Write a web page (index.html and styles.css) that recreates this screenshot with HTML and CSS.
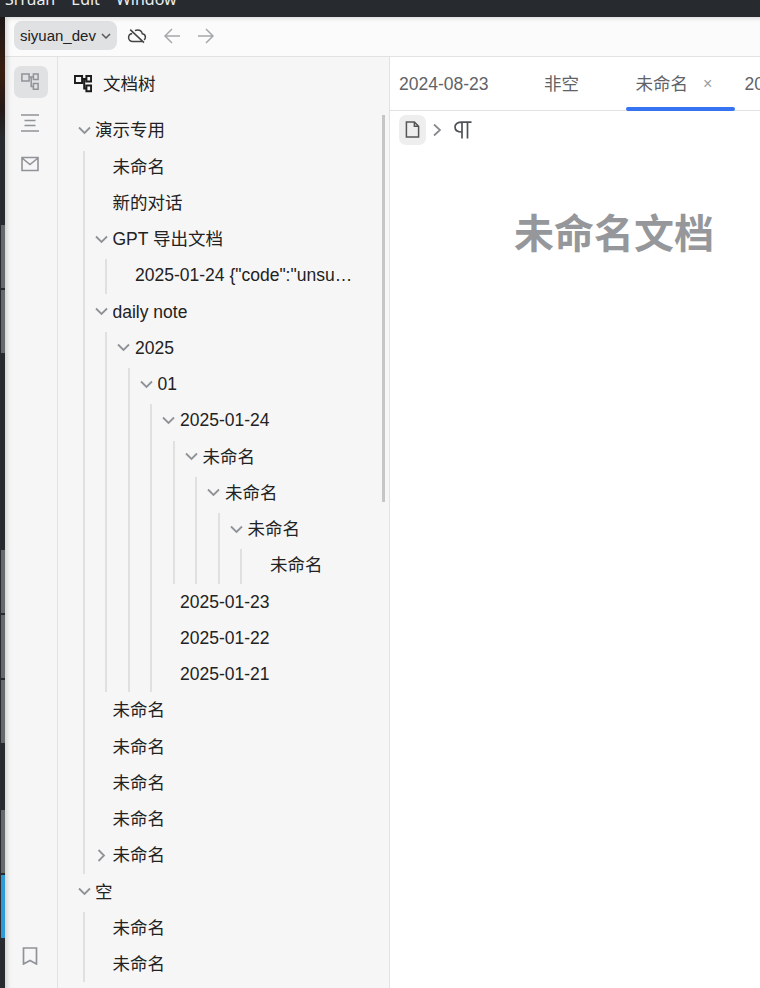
FILE: index.html
```html
<!DOCTYPE html>
<html lang="zh-CN">
<head>
  <meta charset="UTF-8" />
  <title>SiYuan</title>
  <link rel="stylesheet" href="styles.css">
</head>
<body>
  <svg class="defs" width="0" height="0">
    <symbol id="i-down" viewBox="0 0 19 19"><path d="M4 6.500l5.500 5.500 5.500-5.500" fill="none" stroke="currentColor" stroke-width="1.800"/></symbol>
    <symbol id="i-right" viewBox="0 0 19 19"><path d="M6.500 4l5.500 5.500-5.500 5.500" fill="none" stroke="currentColor" stroke-width="1.800"/></symbol>
    <symbol id="i-tree" viewBox="0 0 18 18"><path d="M.9.9h7.200v7.200H.9zM12.400.9h4.700v5.600h-4.700zM12.400 10.600h4.700v5.600h-4.700zM8.100 4h4.300M10.200 4v9.400h2.200" fill="none" stroke="currentColor"/></symbol>
  </svg>

  <div class="os-bar">
    <div class="os-menu"><span>SiYuan</span><span>Edit</span><span>Window</span></div>
  </div>

  <div class="desktop">
    <div class="strip">
      <div class="wall"></div>
      <div class="thumb"></div>
      <div class="thumb"></div>
      <div class="thumb second"></div>
      <div class="thumb"></div>
      <div class="thumb"></div>
      <div class="thumb third"></div>
      <div class="thumb blue"></div>
    </div>

    <div class="window">
      <div class="toolbar">
        <div class="box-btn">siyuan_dev
          <svg class="box-arrow" viewBox="0 0 12 12"><path d="M2 4l4 4 4-4" fill="none" stroke="currentColor" stroke-width="1.500"/></svg>
        </div>
        <svg class="cloud" viewBox="0 0 20 20"><path d="M5.200 7.600C3 8 1.600 9.700 1.600 11.600c0 2.200 1.800 3.900 4 3.900h9.400M8 4.700c.8-.5 1.700-.7 2.600-.7 2.300 0 4.200 1.500 4.700 3.700 1.800.2 3.100 1.700 3.100 3.500 0 1.100-.5 2.100-1.300 2.800M3.200 3.600l13.800 13" fill="none" stroke="currentColor" stroke-width="1.500"/></svg>
        <svg class="nav-arrow" viewBox="0 0 18 18"><path d="M17 9H2M9 2L2 9l7 7" fill="none" stroke="currentColor" stroke-width="1.500"/></svg>
        <svg class="nav-arrow" viewBox="0 0 18 18"><path d="M1 9h15M9 2l7 7-7 7" fill="none" stroke="currentColor" stroke-width="1.500"/></svg>
      </div>

      <div class="workspace">
        <div class="dock">
          <div class="dock-btn active"><svg class="dock-icon"><use href="#i-tree"/></svg></div>
          <div class="dock-btn">
            <svg class="dock-icon" viewBox="0 0 18 18"><path d="M0 1h18M3.500 6.500h11M3.500 11.500h11M0 17h18" fill="none" stroke="currentColor" stroke-width="1.500"/></svg>
          </div>
          <div class="dock-btn">
            <svg class="dock-icon" viewBox="0 0 18 18"><path d="M1 2.500h16v13H1zM1 3l8 6.500L17 3" fill="none" stroke="currentColor" stroke-width="1.600"/></svg>
          </div>
          <div class="dock-spacer"></div>
          <div class="dock-btn">
            <svg class="dock-icon" viewBox="0 0 18 18"><path d="M2.500 1h13v16L9 13.500 2.500 17z" fill="none" stroke="currentColor" stroke-width="1.700"/></svg>
          </div>
          <div class="dock-btn">
            <svg class="dock-icon" viewBox="0 0 18 18"><path d="M2 1h9M2 1v16" fill="none" stroke="currentColor" stroke-width="1.700"/></svg>
          </div>
        </div>

        <div class="panel">
          <div class="panel-head">
            <svg class="panel-icon"><use href="#i-tree"/></svg>
            <span>文档树</span>
          </div>
          <div class="scroll-thumb"></div>

          <ul class="tree">
            <li>
              <div class="row"><svg class="arrow"><use href="#i-down"/></svg><span class="name">演示专用</span></div>
              <ul class="first-level">
                <li><div class="row"><i class="arrow"></i><span class="name">未命名</span></div></li>
                <li><div class="row"><i class="arrow"></i><span class="name">新的对话</span></div></li>
                <li>
                  <div class="row"><svg class="arrow"><use href="#i-down"/></svg><span class="name">GPT 导出文档</span></div>
                  <ul>
                    <li><div class="row"><i class="arrow"></i><span class="name">2025-01-24 {"code":"unsupported_country_region"}</span></div></li>
                  </ul>
                </li>
                <li>
                  <div class="row"><svg class="arrow"><use href="#i-down"/></svg><span class="name">daily note</span></div>
                  <ul>
                    <li>
                      <div class="row"><svg class="arrow"><use href="#i-down"/></svg><span class="name">2025</span></div>
                      <ul>
                        <li>
                          <div class="row"><svg class="arrow"><use href="#i-down"/></svg><span class="name">01</span></div>
                          <ul>
                            <li>
                              <div class="row"><svg class="arrow"><use href="#i-down"/></svg><span class="name">2025-01-24</span></div>
                              <ul>
                                <li>
                                  <div class="row"><svg class="arrow"><use href="#i-down"/></svg><span class="name">未命名</span></div>
                                  <ul>
                                    <li>
                                      <div class="row"><svg class="arrow"><use href="#i-down"/></svg><span class="name">未命名</span></div>
                                      <ul>
                                        <li>
                                          <div class="row"><svg class="arrow"><use href="#i-down"/></svg><span class="name">未命名</span></div>
                                          <ul>
                                            <li><div class="row"><i class="arrow"></i><span class="name">未命名</span></div></li>
                                          </ul>
                                        </li>
                                      </ul>
                                    </li>
                                  </ul>
                                </li>
                              </ul>
                            </li>
                            <li><div class="row"><i class="arrow"></i><span class="name">2025-01-23</span></div></li>
                            <li><div class="row"><i class="arrow"></i><span class="name">2025-01-22</span></div></li>
                            <li><div class="row"><i class="arrow"></i><span class="name">2025-01-21</span></div></li>
                          </ul>
                        </li>
                      </ul>
                    </li>
                  </ul>
                </li>
                <li><div class="row"><i class="arrow"></i><span class="name">未命名</span></div></li>
                <li><div class="row"><i class="arrow"></i><span class="name">未命名</span></div></li>
                <li><div class="row"><i class="arrow"></i><span class="name">未命名</span></div></li>
                <li><div class="row"><i class="arrow"></i><span class="name">未命名</span></div></li>
                <li><div class="row"><svg class="arrow"><use href="#i-right"/></svg><span class="name">未命名</span></div></li>
              </ul>
            </li>
            <li>
              <div class="row"><svg class="arrow"><use href="#i-down"/></svg><span class="name">空</span></div>
              <ul class="first-level">
                <li><div class="row"><i class="arrow"></i><span class="name">未命名</span></div></li>
                <li><div class="row"><i class="arrow"></i><span class="name">未命名</span></div></li>
              </ul>
            </li>
          </ul>
        </div>

        <div class="main">
          <div class="tabs">
            <div class="tab"><span>2024-08-23</span><span class="tab-close"></span></div>
            <div class="tab"><span>非空</span><span class="tab-close"></span></div>
            <div class="tab active"><span>未命名</span><span class="tab-close">×</span></div>
            <div class="tab"><span>2025-01-24</span></div>
          </div>
          <div class="crumbs">
            <div class="crumb-file">
              <svg class="file-icon" viewBox="0 0 16 18"><path d="M1.500 1h8.500l4.500 4.500V17h-13zM10 1v4.500h4.500" fill="none" stroke="currentColor" stroke-width="1.600"/></svg>
            </div>
            <svg class="crumb-sep" viewBox="0 0 10 14"><path d="M2 1.500L8 7l-6 5.500" fill="none" stroke="currentColor" stroke-width="1.700"/></svg>
            <svg class="crumb-para" viewBox="0 0 18 18"><path d="M17.500 1.200H8C3.500 1.200 1 3 1 6s2.500 5 7 5M8 1.200V17.500M13.500 1.200V17.500" fill="none" stroke="currentColor" stroke-width="1.700"/></svg>
          </div>
          <h1 class="doc-title">未命名文档</h1>
        </div>
      </div>
    </div>
  </div>
</body>
</html>
```

FILE: styles.css
```css
:root {
  --text: #222;
  --muted: #5f6368;
  --icon: #909398;
  --line: #e0e0e0;
  --panel: #f6f6f6;
}

* {
  box-sizing: border-box;
  margin: 0;
  padding: 0;
}

html, body {
  height: 988px;
  overflow: hidden;
}

body {
  background: #272b30;
  color: var(--text);
  font-family: "Liberation Sans", "Noto Sans CJK SC", sans-serif;
  font-size: 17.5px;
  line-height: 24px;
}

.defs {
  position: absolute;
}

/* system bar, only the lower part of its text is on screen */
.os-bar {
  height: 17px;
  overflow: hidden;
  background: #272b30;
  color: #eceef0;
  font-family: "Noto Sans", sans-serif;
  font-size: 16px;
  padding-left: 5px;
}
.os-menu {
  display: flex;
  gap: 16px;
  margin-top: -13px;
}

.desktop {
  display: flex;
  height: 996px;
}

.strip {
  width: 5px;
  flex-shrink: 0;
  display: flex;
  flex-direction: column;
  gap: 2px;
  background: #272b30;
}
.wall {
  height: 123px;
  margin-bottom: 83px;
  background: linear-gradient(#1d1717, #3a1f10 45%, #241a18 75%, #272b30);
}
.thumb {
  height: 63px;
  margin-left: 1px;
  background: #666a6c;
}
.thumb.second { margin-top: 195px; }
.thumb.third { margin-top: 65px; }
.thumb.blue { background: #2f9bd6; }

.window {
  flex: 1;
  min-width: 0;
  display: flex;
  flex-direction: column;
  position: relative;
}
.window::after {
  content: "";
  position: absolute;
  inset: 0;
  pointer-events: none;
  box-shadow: inset 5px 4px 5px -3px rgba(0, 0, 0, 0.16);
}

.toolbar {
  height: 40px;
  flex-shrink: 0;
  display: flex;
  align-items: center;
  background: #fbfbfb;
  border-bottom: 1px solid #e2e2e2;
  padding-left: 9px;
  padding-bottom: 2px;
}
.box-btn {
  height: 29px;
  width: 103px;
  display: flex;
  align-items: center;
  justify-content: space-between;
  padding: 0 5px 0 6px;
  border-radius: 8px;
  background: #dfe1e3;
  font-size: 15px;
  color: #222;
}
.box-arrow {
  width: 12px;
  height: 12px;
  color: #555;
}
.cloud {
  width: 20px;
  height: 20px;
  margin-left: 10px;
  color: #444;
}
.nav-arrow {
  width: 18px;
  height: 18px;
  margin-left: 16px;
  color: #a6a8ab;
}

.workspace {
  flex: 1;
  display: flex;
  min-height: 0;
}

.dock {
  width: 53px;
  flex-shrink: 0;
  display: flex;
  flex-direction: column;
  align-items: center;
  gap: 9px;
  padding-top: 9px;
  background: var(--panel);
  border-right: 1px solid #e2e2e2;
}
.dock-spacer {
  flex: 1;
}
.dock-btn {
  width: 34px;
  height: 32px;
  flex-shrink: 0;
  display: flex;
  align-items: center;
  justify-content: center;
  padding-right: 3px;
  border-radius: 7px;
  color: var(--icon);
}
.dock-btn.active {
  background: #dfe1e3;
  padding-right: 2px;
}
.dock-icon {
  width: 18px;
  height: 18px;
  stroke-width: 1.5;
}

.panel {
  width: 332px;
  flex-shrink: 0;
  position: relative;
  background: var(--panel);
  border-right: 1px solid #e2e2e2;
  padding-right: 31px;
}
.panel-head {
  height: 57.25px;
  display: flex;
  align-items: center;
  padding: 0 0 3px 16px;
  gap: 11px;
}
.panel-icon {
  width: 18px;
  height: 18px;
  color: #1d1d1d;
  stroke-width: 2;
}
.scroll-thumb {
  position: absolute;
  top: 58px;
  right: 4px;
  width: 3px;
  height: 387px;
  background: #c6c6c6;
}

/* tree */
.tree, .tree ul {
  list-style: none;
  display: flex;
  flex-direction: column;
  gap: 2px;
  min-width: 0;
}
.tree li {
  display: flex;
  flex-direction: column;
  gap: 2px;
  min-width: 0;
}
.tree {
  padding-left: 10px;
}
.tree ul {
  margin-left: 20.5px;
  border-left: 2px solid var(--line);
}
.tree > li > .first-level {
  margin-left: 14.5px;
}
.row {
  height: 34.25px;
  display: flex;
  align-items: center;
  padding: 0 0 2px 7px;
  gap: 2px;
  min-width: 0;
}
.tree > li > .row {
  gap: 1px;
}
.arrow {
  display: block;
  width: 19px;
  height: 19px;
  flex-shrink: 0;
  color: #8f9296;
}
.name {
  min-width: 0;
  white-space: nowrap;
  overflow: hidden;
  text-overflow: ellipsis;
}

/* editor side */
.main {
  flex: 1;
  min-width: 0;
  background: #fff;
  overflow: hidden;
}
.tabs {
  height: 54px;
  display: flex;
  border-bottom: 1px solid #e2e2e2;
  color: var(--muted);
  white-space: nowrap;
}
.tab {
  position: relative;
  flex-shrink: 0;
  display: flex;
  align-items: center;
  padding-left: 9px;
}
.tab-close {
  width: 46.5px;
  padding-left: 15px;
  color: #9a9da1;
  font-size: 16px;
}
.tab.active {
  padding-left: 10px;
}
.tab.active::after {
  content: "";
  position: absolute;
  left: 0;
  right: 0;
  bottom: -1px;
  height: 4px;
  border-radius: 2px;
  background: #3573f0;
}
.tab:last-child {
  padding-left: 10px;
}

.crumbs {
  display: flex;
  align-items: center;
  height: 35px;
  padding: 2px 0 0 9px;
}
.crumb-file {
  width: 27px;
  height: 30px;
  display: flex;
  align-items: center;
  justify-content: center;
  background: #eee;
  border-radius: 7px;
  color: #555;
}
.file-icon {
  width: 15px;
  height: 17px;
}
.crumb-sep {
  width: 10px;
  height: 14px;
  margin-left: 6px;
  color: #85888c;
}
.crumb-para {
  width: 18px;
  height: 18px;
  margin-left: 12px;
  color: #4e5257;
}
.doc-title {
  margin: 60px 0 0 124px;
  font-size: 40px;
  line-height: 56px;
  font-weight: 700;
  color: #95979b;
  white-space: nowrap;
}
```
